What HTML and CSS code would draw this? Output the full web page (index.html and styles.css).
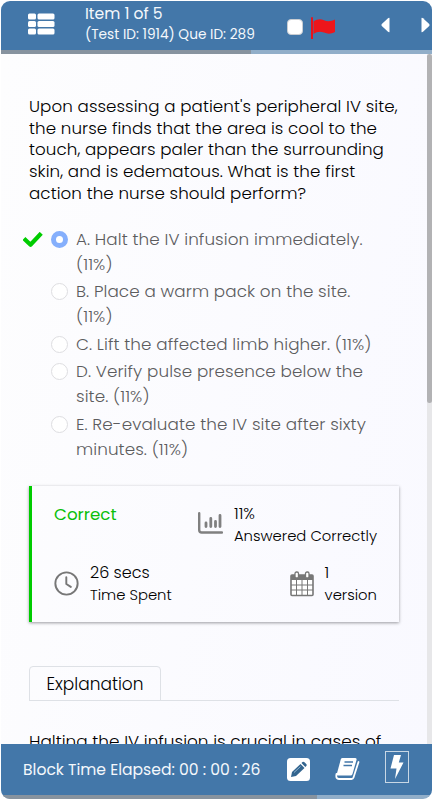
FILE: index.html
```html
<!DOCTYPE html>
<html lang="en">
  <head>
    <meta charset="UTF-8" />
    <meta name="viewport" content="width=device-width, initial-scale=1.0" />
    <title>Item 1 of 5</title>
    <link rel="stylesheet" href="styles.css">
  </head>
  <body>
    <div class="app">
      <header class="top-bar">
        <svg class="list-icon" viewBox="0 0 27 22" fill="#fff">
          <rect x="0" y="0.5" width="8" height="6" rx="1.5" />
          <rect x="9.5" y="0.5" width="17" height="6" rx="1.5" />
          <rect x="0" y="8" width="8" height="6" rx="1.5" />
          <rect x="9.5" y="8" width="17" height="6" rx="1.5" />
          <rect x="0" y="15.5" width="8" height="6" rx="1.5" />
          <rect x="9.5" y="15.5" width="17" height="6" rx="1.5" />
        </svg>
        <div class="item-info">
          <div class="item-count">Item 1 of 5</div>
          <div class="item-id">(Test ID: 1914) Que ID: 289</div>
        </div>
        <span class="mark-box"></span>
        <svg class="flag-icon" viewBox="0 0 26 22">
          <path d="M2 1v20.500" stroke="#e8121c" stroke-width="2" stroke-linecap="round" />
          <path d="M3.500 4.500C7 1.800 11 1.800 14 3.200s7 1.300 11-.7v12.500c-4 2-7 2.300-11 .6s-7-1-10.500 1.400z" fill="#ee161b" />
        </svg>
        <svg class="prev-icon" viewBox="0 0 9 16"><path d="M8.500 1v14Q8 15.500 7 14.700L.8 9Q0 8 .8 7L7 1.300Q8 .5 8.500 1z" fill="#fff" /></svg>
        <svg class="next-icon" viewBox="0 0 9 16"><path d="M.5 1v14Q1 15.500 2 14.700L8.200 9Q9 8 8.200 7L2 1.300Q1 .5 .5 1z" fill="#fff" /></svg>
      </header>
      <div class="scroll-x"><div class="thumb-x thumb-top"></div></div>

      <div class="body">
        <main class="content">
          <p class="question">
            Upon assessing a patient's peripheral IV site,<br>
            the nurse finds that the area is cool to the<br>
            touch, appears paler than the surrounding<br>
            skin, and is edematous. What is the first<br>
            action the nurse should perform?
          </p>

          <ul class="options">
            <li class="option">
              <svg class="check" viewBox="0 0 20 16"><path d="M2.500 8l5 4.700L16.800 2.800" fill="none" stroke="#0c0" stroke-width="4.200" stroke-linejoin="round" stroke-linecap="square" /></svg>
              <span class="radio radio-on"></span>
              <span>A. Halt the IV infusion immediately.<br>(11%)</span>
            </li>
            <li class="option"><span class="radio"></span><span>B. Place a warm pack on the site.<br>(11%)</span></li>
            <li class="option"><span class="radio"></span><span>C. Lift the affected limb higher. (11%)</span></li>
            <li class="option"><span class="radio"></span><span>D. Verify pulse presence below the<br>site. (11%)</span></li>
            <li class="option"><span class="radio"></span><span>E. Re-evaluate the IV site after sixty<br>minutes. (11%)</span></li>
          </ul>

          <section class="result">
            <div class="result-row">
              <div class="status">Correct</div>
              <div class="stat">
                <svg class="stat-icon" viewBox="0 0 25 22" fill="none" stroke="#808080" stroke-linecap="round">
                  <path d="M1.200 1.200V18q0 2.500 2.500 2.500h20.300" stroke-width="2.400" />
                  <path d="M8 11v3.500M12.800 6.500v8M17.500 9.500v5M22 3.500v11" stroke-width="2.800" />
                </svg>
                <div><div class="stat-value">11%</div><div class="stat-label">Answered Correctly</div></div>
              </div>
            </div>
            <div class="result-row">
              <div class="stat">
                <svg class="stat-icon clock" viewBox="0 0 26 26" fill="none" stroke="#777" stroke-width="2" stroke-linecap="round">
                  <circle cx="13" cy="13" r="11.600" />
                  <path d="M12.800 6.500v7l4.700 3" stroke-linejoin="round" />
                </svg>
                <div><div class="stat-value">26 secs</div><div class="stat-label">Time Spent</div></div>
              </div>
              <div class="stat">
                <svg class="stat-icon calendar" viewBox="0 0 24 26">
                  <rect x="1" y="4" width="22" height="20.500" rx="1" fill="#fff" stroke="#777" stroke-width="1.600" />
                  <path d="M1 4h22v5H1z" fill="#777" />
                  <path d="M6.500 9v15M12 9v15M17.500 9v15M1 14h22M1 19h22" stroke="#777" />
                  <rect x="5" y="1" width="3.500" height="6" rx="1.500" fill="#fff" stroke="#777" stroke-width="1.300" />
                  <rect x="15.500" y="1" width="3.500" height="6" rx="1.500" fill="#fff" stroke="#777" stroke-width="1.300" />
                </svg>
                <div><div class="stat-value">1</div><div class="stat-label">version</div></div>
              </div>
            </div>
          </section>

          <div class="tabs"><div class="tab">Explanation</div></div>
          <p class="explanation">Halting the IV infusion is crucial in cases of</p>
        </main>
        <div class="scroll-y"><div class="thumb-y"></div></div>
      </div>

      <footer class="bottom-bar">
        <span class="timer">Block Time Elapsed: 00 : 00 : 26</span>
        <svg class="edit-icon" viewBox="0 0 23 23">
          <rect x="0" y="0" width="23" height="23" rx="3.500" fill="#fff" />
          <path d="M4 19l1-5 8.500-8 4 4L9 18zM14.500 5l1-1q1-.8 2 .2l1.700 1.700q1 1 .1 2l-1 1z" fill="#33658f" />
          <path d="M7 14.500l6.500-6" stroke="#a9c6dd" stroke-width=".8" />
        </svg>
        <svg class="book-icon" viewBox="0 0 25 24">
          <path d="M7.500 1H20q2 0 1.500 2l-4 14q-.5 1.500-2 1.500H3q-1.500 0-1.200-1.500L5.800 2.300Q6.200 1 7.500 1z" fill="#fff" />
          <path d="M1.500 17q-1 5 2.500 5h12.500q1.500 0 2-1.500L23.500 5" fill="none" stroke="#fff" stroke-width="1.800" stroke-linecap="round" />
          <path d="M9.500 5h8.500M8.500 8.500H17" stroke="#4377a9" stroke-width="1.400" />
        </svg>
        <span class="bolt-box">
          <svg class="bolt-icon" viewBox="0 0 14 24"><path d="M4 0h7L8.800 7.500H13.500L5 24l1.500-10.500H.5z" fill="#fff" /></svg>
        </span>
      </footer>
      <div class="scroll-x"><div class="thumb-x thumb-bottom"></div></div>
    </div>
  </body>
</html>
```
FILE: styles.css
```css
* {
  box-sizing: border-box;
}
body {
  margin: 0;
  background-color: #FFF;
  font-family: Poppins, Inter, "Liberation Sans", sans-serif;
  color: #000;
}
p, ul {
  margin: 0;
  padding: 0;
}
svg {
  display: block;
  flex: none;
}
.app {
  display: flex;
  flex-direction: column;
  width: 431px;
  height: 798px;
  margin: 1px 0 0 1px;
  border-radius: 9px;
  overflow: hidden;
}
.top-bar {
  display: flex;
  align-items: flex-start;
  height: 49px;
  flex: none;
  background-color: #4377A9;
  color: #F4F8FC;
  white-space: nowrap;
}
.list-icon {
  width: 27px;
  height: 22px;
  margin: 12px 0 0 27px;
}
.item-info {
  width: 202px;
  padding-left: 30px;
}
.item-count {
  margin-top: 2px;
  font-size: 15.6px;
  line-height: 22px;
}
.item-id {
  font-size: 13.7px;
  line-height: 20px;
}
.mark-box {
  width: 16px;
  height: 16px;
  margin: 18px 0 0 30px;
  border: 1px solid #C9CDD2;
  border-radius: 4px;
  background-color: #FFF;
}
.flag-icon {
  width: 26px;
  height: 22px;
  margin: 16px 0 0 7px;
}
.prev-icon, .next-icon {
  width: 9px;
  height: 16px;
  margin: 16px 0 0 45px;
}
.next-icon {
  margin-left: 31px;
}
.scroll-x {
  height: 4px;
  flex: none;
  background-color: #91AEC9;
}
.thumb-x {
  height: 4px;
  background-color: #87939F;
}
.thumb-top {
  width: 250px;
}
.thumb-bottom {
  width: 316px;
}
.body {
  display: flex;
  height: 690px;
  flex: none;
  background: linear-gradient(100deg, #FDFDFE, #F9F9FF);
}
.content {
  width: 426px;
  padding: 42px 28px 0;
  overflow: hidden;
  font-weight: 300;
  white-space: nowrap;
}
.scroll-y {
  width: 5px;
  background-color: #E7E7E9;
}
.thumb-y {
  height: 349px;
  border-radius: 3px;
  background-color: #B2B2B4;
}
.question {
  font-size: 16.7px;
  line-height: 21.7px;
  letter-spacing: 0.08px;
}
.options {
  margin-top: 22.5px;
  list-style: none;
  font-size: 16.8px;
  line-height: 25px;
  letter-spacing: 0.09px;
  color: #5C5C5E;
}
.option {
  position: relative;
  display: flex;
  margin-bottom: 2.4px;
  padding-left: 22px;
}
.check {
  position: absolute;
  top: 5px;
  left: -6px;
  width: 20px;
  height: 16px;
}
.radio {
  width: 17px;
  height: 17px;
  flex: none;
  margin: 4px 8px 0 0;
  border: 1px solid #DEDEE1;
  border-radius: 50%;
  background-color: #FFF;
}
.radio-on {
  border: 5px solid #85AFFC;
}
.result {
  height: 136px;
  margin-top: 24.5px;
  padding: 17px 22px 0;
  border-left: 3px solid #00CC00;
  box-shadow: 0 1px 3px #99999F;
}
.result-row {
  display: flex;
  justify-content: space-between;
  height: 59px;
}
.status {
  font-size: 16.7px;
  font-weight: 400;
  line-height: 22px;
  color: #0ABF0A;
}
.stat {
  display: flex;
}
.stat-icon {
  width: 25px;
  height: 22px;
  margin: 9px 11px 0 0;
}
.clock {
  height: 25px;
}
.calendar {
  width: 24px;
  height: 26px;
}
.stat-value {
  font-size: 16px;
  line-height: 22px;
}
.stat-label {
  font-size: 14.8px;
  line-height: 22px;
}
.tabs {
  display: flex;
  height: 35px;
  margin-top: 44px;
  border-bottom: 1px solid #DEE1E6;
}
.tab {
  width: 132px;
  height: 35px;
  border: 1px solid #DEE1E6;
  border-radius: 4px 4px 0 0;
  font-size: 17px;
  line-height: 34px;
  text-align: center;
}
.explanation {
  margin-top: 29px;
  font-size: 16.9px;
  line-height: 22px;
}
.bottom-bar {
  display: flex;
  align-items: flex-start;
  height: 51px;
  flex: none;
  padding-left: 22px;
  background-color: #4377A9;
  color: #F4F8FC;
  white-space: nowrap;
}
.timer {
  width: 264px;
  font-size: 15.6px;
  line-height: 51px;
}
.edit-icon {
  width: 23px;
  height: 23px;
  margin-top: 14px;
}
.book-icon {
  width: 25px;
  height: 24px;
  margin: 13px 0 0 25px;
}
.bolt-box {
  display: flex;
  justify-content: center;
  width: 24px;
  height: 32px;
  margin: 7px 0 0 25px;
  padding-top: 3px;
  border: 1px solid #C8D7E5;
}
.bolt-icon {
  width: 14px;
  height: 24px;
}
```
